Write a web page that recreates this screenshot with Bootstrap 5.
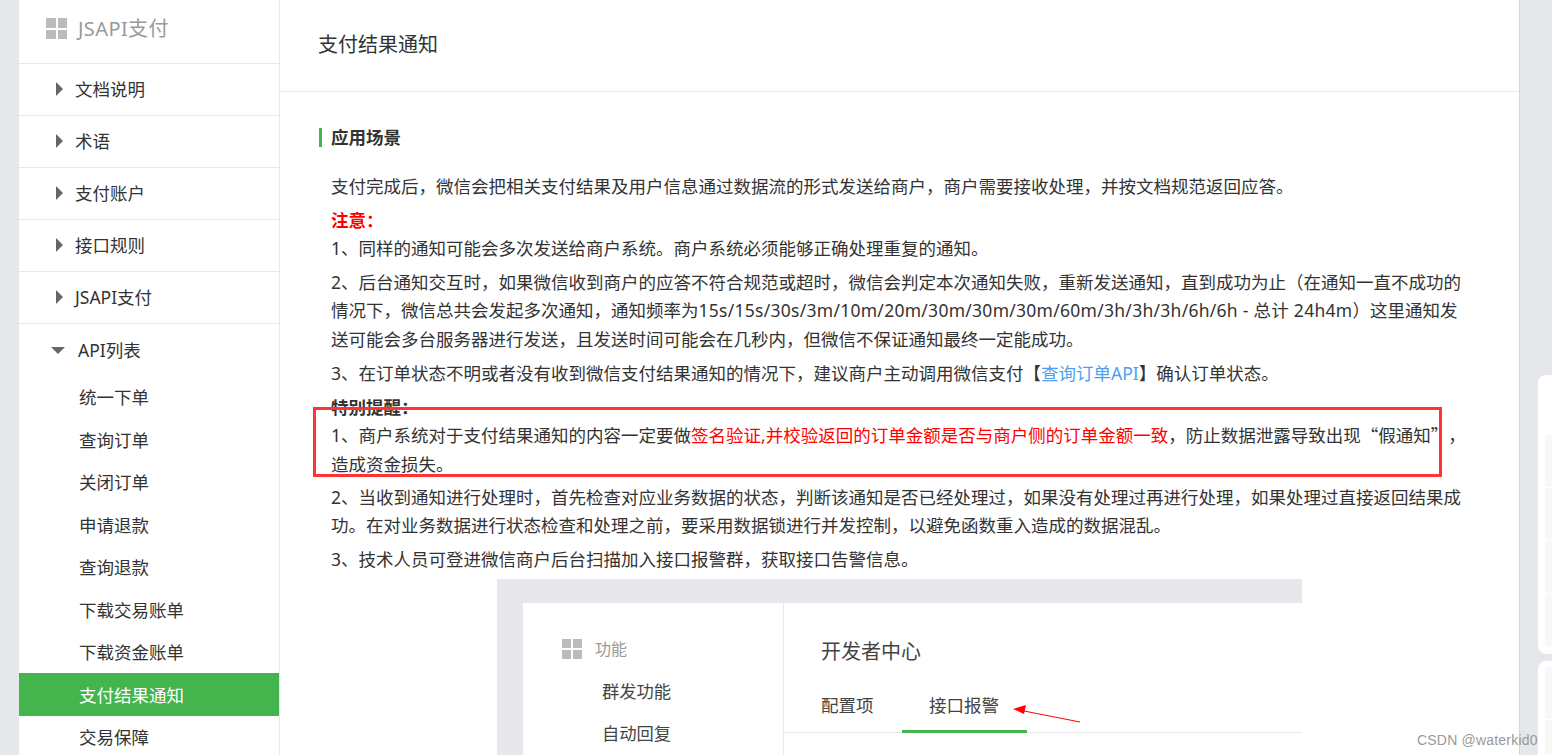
<!DOCTYPE html>
<html lang="zh-CN">
<head>
<meta charset="utf-8">
<title>支付结果通知</title>
<link href="https://cdn.jsdelivr.net/npm/bootstrap@5.3.0/dist/css/bootstrap.min.css" rel="stylesheet">
<style>
html,body{height:755px;overflow:hidden}
body{background:#e5e7ea;font-family:"Noto Sans","Noto Sans CJK SC",sans-serif;color:#333;font-size:17.5px;text-spacing-trim:space-all}
.shell{height:755px;padding:0 32px 0 19px;position:relative}
.side{width:261px;flex:none;background:#fff;border-right:1px solid #e5e7ea;overflow:hidden}
.side-head{height:64px;border-bottom:1px solid #e5e7ea;padding:0 0 6px 27px;color:#999;font-size:20px;gap:11px;letter-spacing:.4px}
.grid-ico{display:grid;grid-template-columns:1fr 1fr;gap:2px}
.grid-ico i{background:#bbb;display:block}
.side-head .grid-ico{width:21px;height:21px}
.side-row{height:52.1px;border-bottom:1px solid #e5e7ea;padding:0 0 1px 37px;font-size:17.5px;color:#333;gap:12px}
.tri-r{width:0;height:0;border-left:7px solid #666;border-top:7px solid transparent;border-bottom:7px solid transparent}
.tri-d{width:0;height:0;border-top:7px solid #666;border-left:7px solid transparent;border-right:7px solid transparent;margin-left:-5px}
.side-open{height:51.5px;padding-left:37px;font-size:17.5px;gap:13px}
.sub-item{height:42.5px;padding-left:60px;font-size:17.5px;color:#333}
.sub-item.on{background:#43b54c;color:#fff}
.doc{background:#fff;min-width:0;flex:1;border-right:1px solid #d4d5d8}
.doc-head{height:92px;border-bottom:1px solid #e5e7ea;padding:0 0 2px 38px;font-size:20px}
.doc-body{padding:36px 50px 0 39px}
.sec-title{border-left:3px solid #43b54c;padding-left:9px;font-size:17.5px;font-weight:700;line-height:19px;margin-bottom:24.6px;color:#333}
.para{margin:0 0 5.6px 12px;line-height:28.4px;position:relative}
.para.para-tight{margin-bottom:4.6px}
.warn{color:#f00}
.doc a{color:#4e9ff0;text-decoration:none}
.wide-latin{letter-spacing:.27px}
.cjk-only{font-family:"Noto Sans CJK SC",sans-serif}
.redbox{position:absolute;left:-18px;top:14px;width:1129px;height:70px;border:3px solid #f33;pointer-events:none}
.shot{width:805px;height:300px;background:#e5e7ea;margin:2.4px 0 0 178px;padding:24px 0 0 26px;overflow:hidden}
.shot-in{background:#fff;height:300px}
.shot-side{width:261px;flex:none;border-right:1px solid #e5e7ea;font-size:16px;color:#444}
.shot-fn{color:#999;gap:13px;padding:35px 0 0 39px;line-height:22px}
.shot-fn .grid-ico{width:20px;height:20px}
.shot-sub{padding-left:79px;line-height:42px;font-size:17.3px}
.shot-sub.first{margin-top:11px}
.shot-main{flex:1;position:relative}
.shot-title{font-size:20px;padding:32px 0 0 37px;line-height:34px;color:#444}
.shot-tabs{margin-top:22px;height:42px;border-bottom:1px solid #e5e7ea;padding-left:37px;font-size:17.5px;color:#444;position:relative}
.shot-tab1{width:108px;line-height:28px}
.shot-tab2{line-height:28px}
.shot-under{position:absolute;left:118px;bottom:-1px;width:125px;height:3px;background:#43b54c}
.arrow-note{position:absolute;left:224px;top:99px}
.float-card{position:absolute;left:1538px;width:30px;background:#fff;border-radius:8px;padding-left:7px}
.float-a{top:375px;height:279px;padding-top:60px}
.float-b{top:661px;height:120px;padding-top:6px}
.float-cell{height:53px;background:#f8f8f9;border-bottom:1px solid #fff}
.mark-csdn{position:absolute;left:1417px;top:731px;font-family:"Liberation Sans",sans-serif;font-size:14px;color:#999;line-height:18px;letter-spacing:.2px}
</style>
</head>
<body>
<div class="shell d-flex">
  <nav class="side">
    <div class="side-head d-flex align-items-center">
      <span class="grid-ico"><i></i><i></i><i></i><i></i></span><span>JSAPI支付</span>
    </div>
    <div class="side-row d-flex align-items-center"><span class="tri-r"></span><span>文档说明</span></div>
    <div class="side-row d-flex align-items-center"><span class="tri-r"></span><span>术语</span></div>
    <div class="side-row d-flex align-items-center"><span class="tri-r"></span><span>支付账户</span></div>
    <div class="side-row d-flex align-items-center"><span class="tri-r"></span><span>接口规则</span></div>
    <div class="side-row d-flex align-items-center"><span class="tri-r"></span><span>JSAPI支付</span></div>
    <div class="side-open d-flex align-items-center"><span class="tri-d"></span><span>API列表</span></div>
    <div class="sub-item d-flex align-items-center">统一下单</div>
    <div class="sub-item d-flex align-items-center">查询订单</div>
    <div class="sub-item d-flex align-items-center">关闭订单</div>
    <div class="sub-item d-flex align-items-center">申请退款</div>
    <div class="sub-item d-flex align-items-center">查询退款</div>
    <div class="sub-item d-flex align-items-center">下载交易账单</div>
    <div class="sub-item d-flex align-items-center">下载资金账单</div>
    <div class="sub-item on d-flex align-items-center">支付结果通知</div>
    <div class="sub-item d-flex align-items-center">交易保障</div>
  </nav>
  <main class="doc">
    <div class="doc-head d-flex align-items-center">支付结果通知</div>
    <div class="doc-body">
      <div class="sec-title">应用场景</div>
      <p class="para">支付完成后，微信会把相关支付结果及用户信息通过数据流的形式发送给商户，商户需要接收处理，并按文档规范返回应答。</p>
      <p class="para"><b class="warn">注意：</b><br>1、同样的通知可能会多次发送给商户系统。商户系统必须能够正确处理重复的通知。</p>
      <p class="para">2、后台通知交互时，如果微信收到商户的应答不符合规范或超时，微信会判定本次通知失败，重新发送通知，直到成功为止（在通知一直不成功的情况下，微信总共会发起多次通知，通知频率为<span class="wide-latin">15s/15s/30s/3m/10m/20m/30m/30m/30m/60m/3h/3h/3h/6h/6h - 总计 24h4m</span>）这里通知发送可能会多台服务器进行发送，且发送时间可能会在几秒内，但微信不保证通知最终一定能成功。</p>
      <p class="para">3、在订单状态不明或者没有收到微信支付结果通知的情况下，建议商户主动调用微信支付【<a href="#">查询订单API</a>】确认订单状态。</p>
      <p class="para para-tight"><b>特别提醒：</b><br>1、商户系统对于支付结果通知的内容一定要做<span class="warn">签名验证,并校验返回的订单金额是否与商户侧的订单金额一致</span>，防止数据泄露导致出现<span class="cjk-only">“假通知”，</span>造成资金损失。<span class="redbox"></span></p>
      <p class="para">2、当收到通知进行处理时，首先检查对应业务数据的状态，判断该通知是否已经处理过，如果没有处理过再进行处理，如果处理过直接返回结果成功。在对业务数据进行状态检查和处理之前，要采用数据锁进行并发控制，以避免函数重入造成的数据混乱。</p>
      <p class="para">3、技术人员可登进微信商户后台扫描加入接口报警群，获取接口告警信息。</p>
      <div class="shot">
        <div class="shot-in d-flex">
          <div class="shot-side">
            <div class="shot-fn d-flex align-items-center"><span class="grid-ico"><i></i><i></i><i></i><i></i></span><span>功能</span></div>
            <div class="shot-sub first">群发功能</div>
            <div class="shot-sub">自动回复</div>
          </div>
          <div class="shot-main">
            <div class="shot-title">开发者中心</div>
            <div class="shot-tabs d-flex"><span class="shot-tab1">配置项</span><span class="shot-tab2">接口报警</span><span class="shot-under"></span></div>
            <svg class="arrow-note" width="80" height="24" viewBox="0 0 80 24"><path d="M72 20 16 9" stroke="#f00" stroke-width="1" fill="none"/><path d="M5 7 18 3 16 12Z" fill="#f00"/></svg>
          </div>
        </div>
      </div>
    </div>
  </main>
  <div class="float-card float-a"><div class="float-cell"></div><div class="float-cell"></div><div class="float-cell"></div><div class="float-cell"></div></div>
  <div class="float-card float-b"><div class="float-cell"></div><div class="float-cell"></div></div>
  <div class="mark-csdn">CSDN @waterkid0</div>
</div>
<script src="https://cdn.jsdelivr.net/npm/bootstrap@5.3.0/dist/js/bootstrap.bundle.min.js"></script>
</body>
</html>
